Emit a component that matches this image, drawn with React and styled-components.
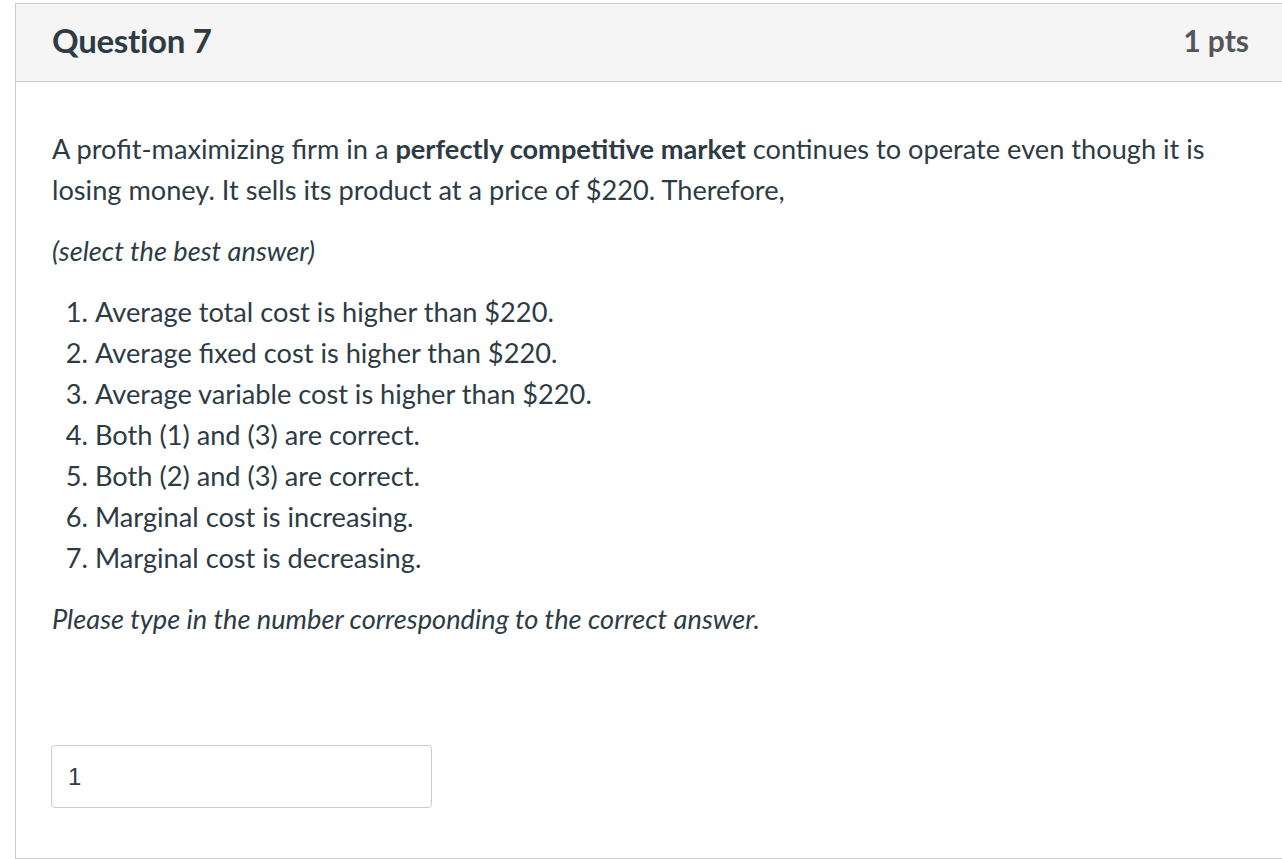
import React from "react";
import styled, { createGlobalStyle } from "styled-components";

const Global = createGlobalStyle`
  html, body { margin: 0; padding: 0; background: #fff; }
  body { font-family: Lato, "Open Sans", sans-serif; color: #2d3b45; }
  * { box-sizing: border-box; }
`;

const Page = styled.div`
  padding: 3px 0 0 15px;
  width: 1282px;
  height: 859px;
  overflow: hidden;
`;

const Panel = styled.section`
  border: 1px solid #c7cdd1;
  border-right: none;
  height: 856px;
  display: flex;
  flex-direction: column;
`;

const Header = styled.header`
  height: 78px;
  background: #f5f5f5;
  border-bottom: 1px solid #c7cdd1;
  display: flex;
  align-items: center;
  justify-content: space-between;
  padding: 0 33px 6px 36px;
`;

const Title = styled.h2`
  margin: 0;
  font-size: 33px;
  font-weight: 700;
  color: #2d3b45;
  letter-spacing: -0.3px;
`;

const Points = styled.span`
  font-size: 30px;
  font-weight: 700;
  color: #53575a;
`;

const Body = styled.div`
  flex: 1;
  padding: 46px 60px 0 36px;
  font-size: 27.2px;
  line-height: 41px;
`;

const Para = styled.p`
  margin: 0 0 20px 0;
  font-style: ${(p) => (p.$italic ? "italic" : "normal")};
`;

const List = styled.ol`
  margin: 0 0 20px 0;
  padding-left: 43px;
`;

const Answer = styled.div`
  margin-top: 106px;
`;

const Input = styled.div`
  width: 381px;
  height: 63px;
  margin-left: -1px;
  border: 1px solid #c7cdd1;
  border-radius: 4px;
  display: flex;
  align-items: center;
  padding-left: 16px;
  font-family: "Liberation Sans", Arial, sans-serif;
  font-size: 24px;
  color: #2d3b45;
`;

const options = [
  "Average total cost is higher than $220.",
  "Average fixed cost is higher than $220.",
  "Average variable cost is higher than $220.",
  "Both (1) and (3) are correct.",
  "Both (2) and (3) are correct.",
  "Marginal cost is increasing.",
  "Marginal cost is decreasing.",
];

export default function App() {
  return (
    <>
      <Global />
      <Page>
        <Panel>
          <Header>
            <Title>Question 7</Title>
            <Points>1 pts</Points>
          </Header>
          <Body>
            <Para>
              A profit-maximizing firm in a <strong>perfectly competitive market</strong> continues to operate even though it is losing money. It sells its product at a price of $220. Therefore,
            </Para>
            <Para $italic>(select the best answer)</Para>
            <List>
              {options.map((o) => (
                <li key={o}>{o}</li>
              ))}
            </List>
            <Para $italic>Please type in the number corresponding to the correct answer.</Para>
            <Answer>
              <Input>1</Input>
            </Answer>
          </Body>
        </Panel>
      </Page>
    </>
  );
}
